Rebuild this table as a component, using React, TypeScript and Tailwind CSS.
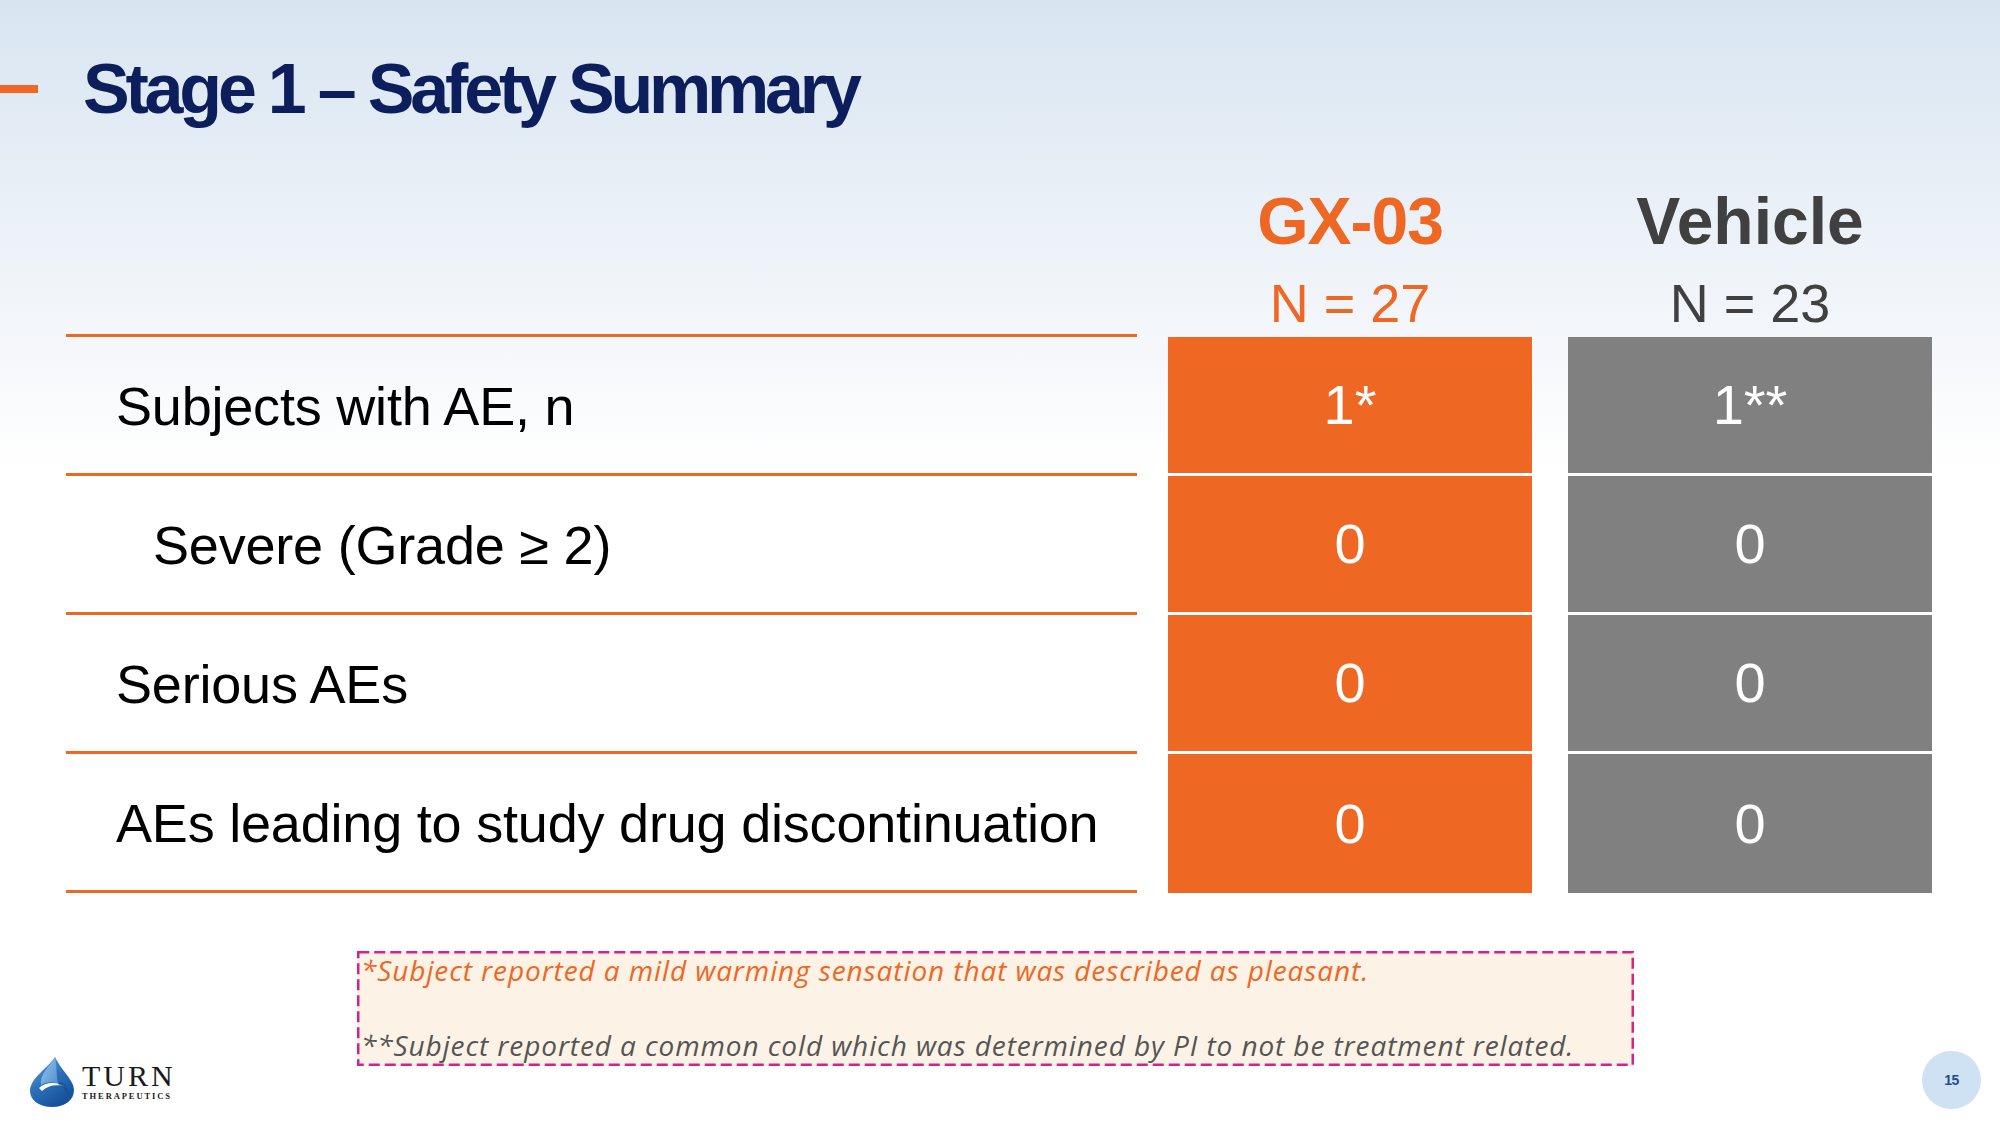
import React from "react";

const rows = [
  { label: "Subjects with AE, n", indent: false, a: "1*", b: "1**" },
  { label: "Severe (Grade \u2265 2)", indent: true, a: "0", b: "0" },
  { label: "Serious AEs", indent: false, a: "0", b: "0" },
  { label: "AEs leading to study drug discontinuation", indent: false, a: "0", b: "0" },
];

function Drop() {
  return (
    <svg width="44" height="50" viewBox="0 0 44 50">
      <defs>
        <linearGradient id="dg" x1="0" y1="0" x2="0.6" y2="1">
          <stop offset="0" stopColor="#6aa6dc" />
          <stop offset="0.5" stopColor="#2f73bb" />
          <stop offset="1" stopColor="#14519a" />
        </linearGradient>
        <linearGradient id="dl" x1="0" y1="0" x2="1" y2="1">
          <stop offset="0" stopColor="#9cc6ec" />
          <stop offset="1" stopColor="#4d8fcf" />
        </linearGradient>
      </defs>
      <path d="M25 0 C19 10 0 21 0 34 C0 43 9 50 22 50 C35 50 44 43 44 33 C44 23 33 16 25 0 Z" fill="url(#dg)" />
      <path d="M25 0 C20 9 9 18 11 28 C17 24 24 25 28 27 C26 18 27 9 25 0 Z" fill="url(#dl)" />
      <path d="M9 31 C15 25 27 24 36 30 C28 27 18 28 12 34 Z" fill="#ffffff" />
      <path d="M28 27 C33 30 37 34 38 40 C40 33 36 27 30 25 Z" fill="#1d4f8e" opacity="0.7" />
    </svg>
  );
}

export default function App() {
  return (
    <div
      className="relative w-[2000px] h-[1125px] overflow-hidden bg-[linear-gradient(180deg,#d8e5f1_0px,#e9f0f7_200px,#f6f8fb_360px,#ffffff_470px)]"
      style={{ fontFamily: '"Liberation Sans", Arial, sans-serif' }}
    >
      {/* Title */}
      <div className="flex items-center pt-[54px]">
        <div className="w-[38px] h-[8px] bg-[#ee6723]" />
        <h1 className="ml-[45px] text-[70px] leading-[70px] font-bold tracking-[-4.2px] text-[#0c1f5c]">
          Stage 1 – Safety Summary
        </h1>
      </div>

      {/* Table */}
      <div className="pl-[66px]">
        <div className="flex mt-[64px]">
          <div className="w-[1071px]" />
          <div className="ml-[31px] w-[364px] flex flex-col items-center">
            <div className="text-[66px] leading-[66px] font-bold tracking-[-1px] text-[#ee6723]">GX-03</div>
            <div className="mt-[22px] text-[54px] leading-[54px] text-[#ee6723]">N = 27</div>
          </div>
          <div className="ml-[36px] w-[364px] flex flex-col items-center">
            <div className="text-[66px] leading-[66px] font-bold text-[#404040]">Vehicle</div>
            <div className="mt-[22px] text-[54px] leading-[54px] text-[#404040]">N = 23</div>
          </div>
        </div>

        <div className="mt-[4px] flex">
          <div className="w-[1071px] h-[3px] bg-[#ee6723]" />
        </div>
        {rows.map((r, i) => (
          <div key={i} className="flex h-[139px]">
            <div
              className={`w-[1071px] h-full border-b-[3px] border-[#ee6723] flex items-center pt-[3px] text-[54px] tracking-[-0.2px] text-black ${
                r.indent ? "pl-[87px]" : "pl-[50px]"
              }`}
            >
              {r.label}
            </div>
            <div
              className={`ml-[31px] w-[364px] h-full bg-[#ee6723] flex items-center justify-center text-[56px] text-white ${
                i < rows.length - 1 ? "border-b-[3px] border-white" : ""
              }`}
            >
              {r.a}
            </div>
            <div
              className={`ml-[36px] w-[364px] h-full bg-[#808080] flex items-center justify-center text-[56px] text-white ${
                i < rows.length - 1 ? "border-b-[3px] border-white" : ""
              }`}
            >
              {r.b}
            </div>
          </div>
        ))}
      </div>

      {/* Bottom: logo, footnote, page number */}
      <div className="flex items-start mt-[58px]">
        <div className="ml-[30px] mt-[106px] w-[327px] flex items-start">
          <Drop />
          <div className="ml-[8px] mt-[6px] flex flex-col" style={{ fontFamily: '"Liberation Serif", "Times New Roman", serif' }}>
            <div className="text-[30px] leading-[26px] tracking-[3px] text-[#1a1a1a]">TURN</div>
            <div className="mt-[3px] text-[8.5px] leading-[9px] font-bold tracking-[1.9px] text-[#1a1a1a]">THERAPEUTICS</div>
          </div>
        </div>

        <div className="relative w-[1277px] h-[115px] bg-[#fcf2e6] pl-[4px] pt-[3px]" style={{ fontFamily: '"Open Sans", sans-serif' }}>
          <svg className="absolute inset-0" width="1277" height="115">
            <rect x="1.25" y="1.25" width="1274.5" height="112.5" fill="none" stroke="#d6218b" strokeWidth="2.5" strokeDasharray="11 5" />
          </svg>
          <p className="relative italic text-[28px] leading-[32px] tracking-[0.9px] text-[#ee6723]">
            *Subject reported a mild warming sensation that was described as pleasant.
          </p>
          <p className="relative mt-[43px] italic text-[28px] leading-[32px] tracking-[0.9px] text-[#555555]">
            **Subject reported a common cold which was determined by PI to not be treatment related.
          </p>
        </div>

        <div className="ml-auto mr-[19px] mt-[100px] w-[59px] h-[58px] rounded-full bg-[#cfe2f3] flex items-center justify-center">
          <span className="text-[14px] font-bold text-[#1b4f8f] tracking-[-0.5px]">15</span>
        </div>
      </div>
    </div>
  );
}
